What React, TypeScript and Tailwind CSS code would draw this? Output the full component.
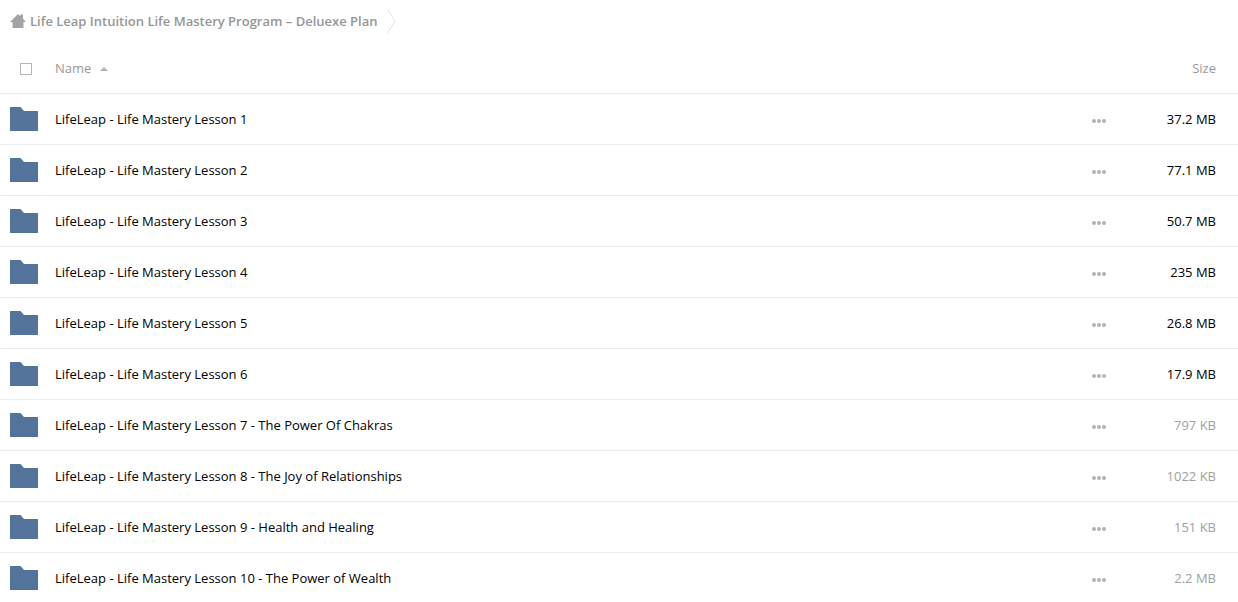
import { useState } from "react";
import clsx from "clsx";

const folders = [
    { name: "LifeLeap - Life Mastery Lesson 1", size: "37.2 MB" },
    { name: "LifeLeap - Life Mastery Lesson 2", size: "77.1 MB" },
    { name: "LifeLeap - Life Mastery Lesson 3", size: "50.7 MB" },
    { name: "LifeLeap - Life Mastery Lesson 4", size: "235 MB" },
    { name: "LifeLeap - Life Mastery Lesson 5", size: "26.8 MB" },
    { name: "LifeLeap - Life Mastery Lesson 6", size: "17.9 MB" },
    { name: "LifeLeap - Life Mastery Lesson 7 - The Power Of Chakras", size: "797 KB", light: true },
    { name: "LifeLeap - Life Mastery Lesson 8 - The Joy of Relationships", size: "1022 KB", light: true },
    { name: "LifeLeap - Life Mastery Lesson 9 - Health and Healing", size: "151 KB", light: true },
    { name: "LifeLeap - Life Mastery Lesson 10 - The Power of Wealth", size: "2.2 MB", light: true },
];

const HomeIcon = () => (
    <svg width="16" height="14" viewBox="0 0 16 14" fill="#a3a3a3" aria-hidden="true">
        <path d="M8 0l2.500 2.300V.5H13v4.200L16 8h-2.500v6h-11V8H0z" />
    </svg>
);

const FolderIcon = () => (
    <svg width="28" height="24" viewBox="0 0 28 24" fill="#54739b" aria-hidden="true">
        <path d="M.5 0h10L14 4h13.500a.5.5 0 0 1 .5.5v19a.5.5 0 0 1-.5.5H.5a.5.5 0 0 1-.5-.5V.5A.5.5 0 0 1 .5 0z" />
    </svg>
);

const DotsIcon = () => (
    <svg width="14" height="4" viewBox="0 0 14 4" fill="#b3b3b3" aria-hidden="true">
        <circle cx="2" cy="2" r="2" />
        <circle cx="7" cy="2" r="2" />
        <circle cx="12" cy="2" r="2" />
    </svg>
);

const Breadcrumb = () => (
    <nav aria-label="Breadcrumb" className="flex h-[43px] items-center pb-[2px] pl-[10px] text-[#969696]">
        <a href="#" className="flex items-center gap-1 font-semibold">
            <HomeIcon />
            Life Leap Intuition Life Mastery Program – Deluexe Plan
        </a>
        <svg className="ml-[10px]" width="9" height="24" viewBox="0 0 9 24" fill="none" stroke="#e2e2e2" aria-hidden="true">
            <path d="M.5 0L8 12 .5 24" />
        </svg>
    </nav>
);

const App = () => {
    const [allSelected, setAllSelected] = useState(false);

    return (
        <div className="h-screen overflow-hidden bg-white font-['Open_Sans',sans-serif] text-[13px] leading-5 text-black">
            <Breadcrumb />
            <table className="w-full border-separate border-spacing-0">
                <thead className="text-[#999999]">
                    <tr>
                        <th className="h-[51px] w-[55px] border-b border-[#ededed] pt-[2px] pl-5">
                            <input
                                type="checkbox"
                                aria-label="Select all"
                                checked={allSelected}
                                onChange={(e) => setAllSelected(e.target.checked)}
                                className="block size-3 appearance-none border border-[#b5b5b5] bg-white checked:bg-[#54739b]" />
                        </th>
                        <th className="border-b border-[#ededed] text-left font-normal">
                            <button type="button" className="flex items-center gap-[9px]">
                                Name
                                <svg className="mt-[2px]" width="8" height="4" viewBox="0 0 8 4" fill="#b0b0b0" aria-hidden="true">
                                    <path d="M0 4l4-4 4 4z" />
                                </svg>
                            </button>
                        </th>
                        <td className="w-[34px] border-b border-[#ededed]"></td>
                        <th className="w-[112px] border-b border-[#ededed] pr-[22px] text-right font-normal">
                            <button type="button">Size</button>
                        </th>
                    </tr>
                </thead>
                <tbody>
                    {folders.map((folder) => (
                        <tr key={folder.name}>
                            <td className="h-[51px] border-b border-[#ededed] pl-[10px]">
                                <FolderIcon />
                            </td>
                            <td className="border-b border-[#ededed]">
                                <a href="#">{folder.name}</a>
                            </td>
                            <td className="border-b border-[#ededed]">
                                <button type="button" aria-label={`Actions for ${folder.name}`} className="flex h-5 items-end pb-[6px]">
                                    <DotsIcon />
                                </button>
                            </td>
                            <td className={clsx("border-b border-[#ededed] pr-[22px] text-right", folder.light && "text-[#a0a0a0]")}>
                                {folder.size}
                            </td>
                        </tr>
                    ))}
                </tbody>
            </table>
        </div>
    );
};

export default App;
